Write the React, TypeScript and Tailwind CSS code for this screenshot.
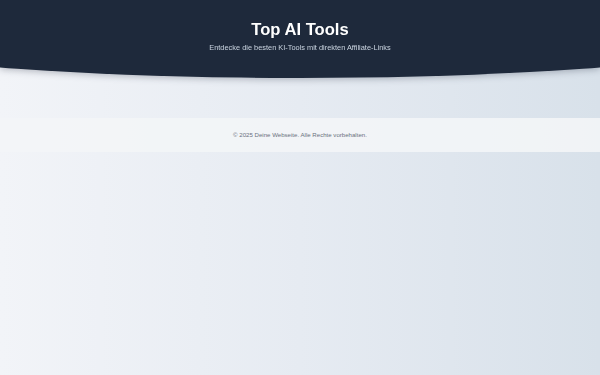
import React from 'react';

const App: React.FC = () => {
  return (
    <div className="min-h-screen w-full bg-[linear-gradient(90deg,#f2f4f8_0%,#e6ebf2_50%,#d8e1ea_100%)] font-['Liberation_Sans',Arial,sans-serif]">
      <div className="drop-shadow-[0_2px_3px_rgba(15,23,42,0.25)]">
        <header className="h-[78px] bg-[#1e293b] pt-[19px] text-center [clip-path:ellipse(100%_100%_at_50%_0%)]">
          <h1 className="text-[16.6px] font-bold leading-[22px] text-white">Top AI Tools</h1>
          <p className="mt-[2px] text-[7.4px] leading-[10px] text-[#cbd5e1]">Entdecke die besten KI-Tools mit direkten Affiliate-Links</p>
        </header>
      </div>

      <main className="h-[40px]"></main>

      <footer className="flex h-[34px] items-center justify-center bg-[#f3f5f7]/90">
        <p className="text-[6.1px] text-[#6b7280]">© 2025 Deine Webseite. Alle Rechte vorbehalten.</p>
      </footer>
    </div>
  );
};

export default App;
